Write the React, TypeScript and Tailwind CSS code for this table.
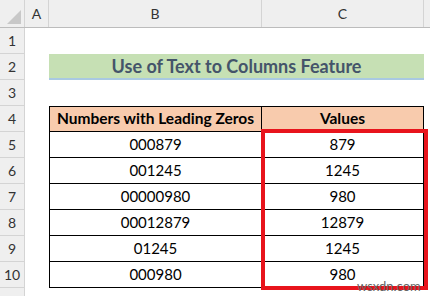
const rows = [
  ["000879", "879"],
  ["001245", "1245"],
  ["00000980", "980"],
  ["00012879", "12879"],
  ["01245", "1245"],
  ["000980", "980"],
];

function RowHead({ n }: { n: number | string }) {
  return (
    <div className="w-[25px] h-full shrink-0 bg-[#efefef] border-r border-b border-[#d4d4d4] flex items-center justify-center text-[14px] text-[#333]">
      {n}
    </div>
  );
}

export default function App() {
  return (
    <div
      className="relative w-[430px] h-[296px] overflow-hidden bg-white"
      style={{ fontFamily: "Lato, 'Liberation Sans', sans-serif" }}
    >
      {/* column headers */}
      <div className="flex h-[28px] bg-[#efefef] border-b border-[#bcbcbc] text-[14px] text-[#333]">
        <div className="relative w-[25px] shrink-0 border-r border-[#d4d4d4]">
          <div
            className="absolute right-[3px] bottom-[3px] w-0 h-0"
            style={{ borderBottom: "14px solid #c8c8c8", borderLeft: "14px solid transparent" }}
          />
        </div>
        <div className="w-[24px] shrink-0 border-r border-[#d4d4d4] flex items-center justify-center">A</div>
        <div className="w-[213px] shrink-0 border-r border-[#d4d4d4] flex items-center justify-center">B</div>
        <div className="w-[162px] shrink-0 border-r border-[#d4d4d4] flex items-center justify-center">C</div>
        <div className="flex-1" />
      </div>

      {/* row 1 */}
      <div className="flex h-[26px]">
        <RowHead n={1} />
      </div>

      {/* row 2 title */}
      <div className="flex h-[26px]">
        <RowHead n={2} />
        <div className="w-[24px] shrink-0" />
        <div className="w-[375px] shrink-0 bg-[#c6e0b4] border-b-2 border-[#a9c9e2] flex items-center justify-center text-[18px] font-bold text-[#44546a]">
          Use of Text to Columns Feature
        </div>
      </div>

      {/* row 3 */}
      <div className="flex h-[26px]">
        <RowHead n={3} />
      </div>

      {/* row 4 header */}
      <div className="flex h-[26px]">
        <RowHead n={4} />
        <div className="w-[24px] shrink-0" />
        <div className="w-[213px] shrink-0 bg-[#f8cbad] border border-black flex items-center justify-center text-[15.5px] font-bold text-black">
          Numbers with Leading Zeros
        </div>
        <div className="w-[162px] shrink-0 bg-[#f8cbad] border-y border-r border-black flex items-center justify-center text-[15.5px] font-bold text-black">
          Values
        </div>
      </div>

      {rows.map(([a, b], i) => (
        <div key={i} className="flex h-[26px]">
          <RowHead n={i + 5} />
          <div className="w-[24px] shrink-0" />
          <div className="w-[213px] shrink-0 border-x border-b border-black flex items-center justify-center text-[15px] text-black">
            {a}
          </div>
          <div className="w-[162px] shrink-0 border-r border-b border-black flex items-center justify-center text-[15px] text-black">
            {b}
          </div>
        </div>
      ))}

      {/* row 11 partial */}
      <div className="flex h-[26px]">
        <RowHead n="" />
      </div>

      {/* selection highlight */}
      <div className="absolute left-[261px] top-[129px] w-[167px] h-[161px] border-4 border-[#e8141c]" />

      <div className="absolute left-[357px] top-[279px] text-[13px] leading-[15px] text-[#666]">
        wsxdn.com
      </div>
    </div>
  );
}
